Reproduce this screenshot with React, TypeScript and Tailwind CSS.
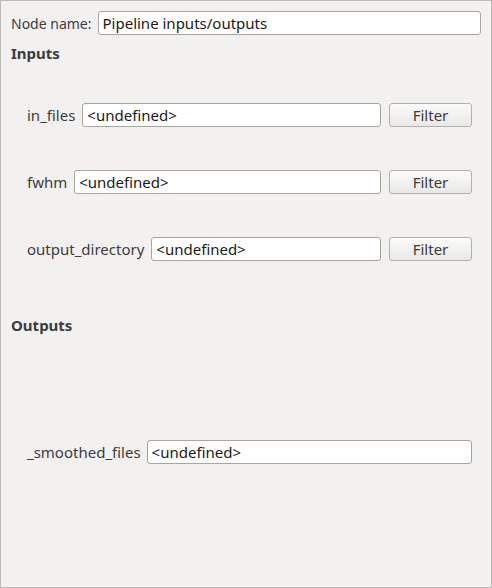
const inputRows = [
  { label: "in_files", top: "mt-[40px]" },
  { label: "fwhm", top: "mt-[43px]" },
  { label: "output_directory", top: "mt-[43px]" },
];

function Field({ value }: { value: string }) {
  return (
    <div className="flex-1 h-[24px] flex items-center px-[4px] bg-white border border-[#a9a59f] rounded-[3px] text-[#1a1a1a]">
      {value}
    </div>
  );
}

export default function App() {
  return (
    <div
      className="w-[492px] h-[588px] bg-[#f2f1f0] border border-[#bdbbb6] text-[15px] text-[#3c3c3c] box-border"
      style={{ fontFamily: '"Noto Sans", "Open Sans", sans-serif' }}
    >
      {/* Node name */}
      <div className="flex items-center gap-[6px] pl-[10px] pr-[10px] mt-[10px]">
        <span className="text-[14px]">Node name:</span>
        <Field value="Pipeline inputs/outputs" />
      </div>

      <div className="pl-[10px] mt-[8px] font-bold leading-[20px]">Inputs</div>

      {inputRows.map((r) => (
        <div key={r.label} className={`flex items-center pl-[26px] pr-[19px] ${r.top}`}>
          <span className="mr-[7px]">{r.label}</span>
          <Field value="<undefined>" />
          <button className="ml-[8px] w-[83px] h-[24px] rounded-[3px] border border-[#b4b1ac] bg-gradient-to-b from-[#fbfbfa] to-[#e9e8e6] text-[#3c3c3c]">
            Filter
          </button>
        </div>
      ))}

      <div className="pl-[10px] mt-[54px] font-bold leading-[20px]">Outputs</div>

      <div className="flex items-center pl-[26px] pr-[19px] mt-[105px]">
        <span className="mr-[6px]">_smoothed_files</span>
        <Field value="<undefined>" />
      </div>
    </div>
  );
}
